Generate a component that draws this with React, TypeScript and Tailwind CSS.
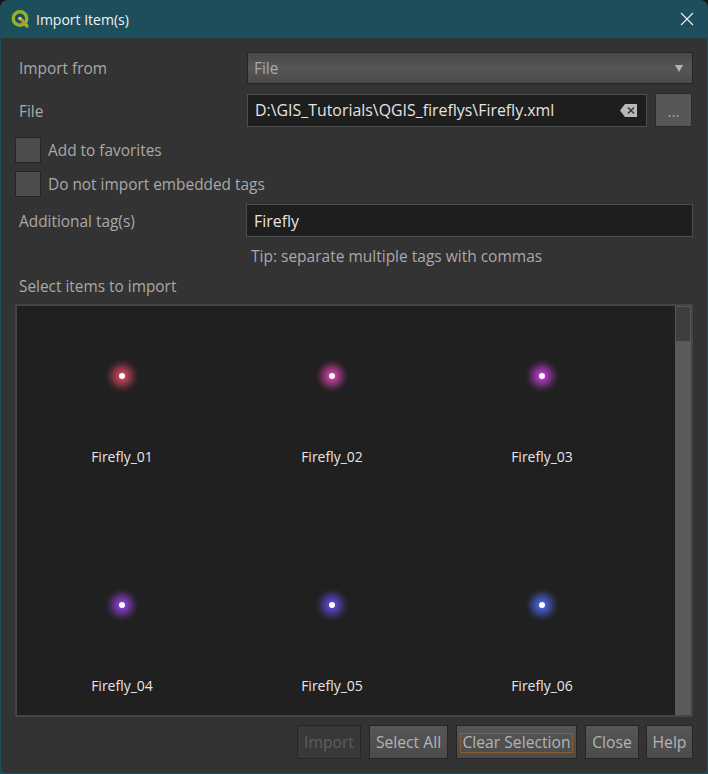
const items = [
  { n: "Firefly_01", c: "#c8455f" },
  { n: "Firefly_02", c: "#c540a0" },
  { n: "Firefly_03", c: "#b53ac8" },
  { n: "Firefly_04", c: "#8a3ed0" },
  { n: "Firefly_05", c: "#5a48d0" },
  { n: "Firefly_06", c: "#4a62d8" },
];

function Btn({ label, w, disabled, focus }: { label: string; w: string; disabled?: boolean; focus?: boolean }) {
  return (
    <div
      className={`${w} h-[34px] flex items-center justify-center pt-[1px] border border-[#262626] ${
        disabled ? "bg-[#383838] text-[#5e5e5e]" : "bg-gradient-to-b from-[#565656] to-[#4b4b4b] text-[#b4b4b4]"
      }`}
    >
      {focus ? (
        <span className="border border-[#8a5e30] h-[20px] px-[1px] flex items-center leading-none">{label}</span>
      ) : (
        label
      )}
    </div>
  );
}

function QgisLogo() {
  return (
    <svg width="20" height="20" viewBox="0 0 20 20" className="shrink-0">
      <circle cx="10" cy="9.5" r="6.8" fill="none" stroke="#8db32c" strokeWidth="3.4" />
      <path d="M12 11.5l5 5.5" stroke="#8db32c" strokeWidth="3.4" strokeLinecap="round" />
      <path d="M9.5 8.5l4 4.5" stroke="#e8a33a" strokeWidth="2.4" />
      <circle cx="10" cy="9.5" r="1.8" fill="#e2c85a" />
      <path d="M10.5 10.5l2.5 3" stroke="#d9592e" strokeWidth="1.6" />
    </svg>
  );
}

function Firefly({ n, c }: { n: string; c: string }) {
  return (
    <div className="h-[229px] flex flex-col items-center">
      <div
        className="mt-[46px] w-[48px] h-[48px] flex items-center justify-center"
        style={{ background: `radial-gradient(circle closest-side, ${c} 0%, ${c}d8 20%, ${c}80 38%, ${c}30 54%, ${c}10 64%, transparent 72%)` }}
      >
        <div className="w-[6px] h-[6px] rounded-full bg-white" />
      </div>
      <div className="mt-[47px] text-[14px] leading-[20px] text-[#e6e6e6]">{n}</div>
    </div>
  );
}

export default function App() {
  return (
    <div className="w-[708px] h-[774px] bg-[#161616] overflow-hidden font-['Open_Sans','Liberation_Sans',sans-serif] text-[15.4px]">
      <div className="w-full h-full flex flex-col rounded-t-[8px] overflow-hidden bg-[#1c4f5b]">
        <div className="h-[38px] shrink-0 flex items-center pl-[10px] pr-[14px] text-[#f2f2f2] text-[14px]">
          <QgisLogo />
          <span className="ml-[6px]">Import Item(s)</span>
          <svg width="14" height="14" viewBox="0 0 14 14" className="ml-auto">
            <path d="M1 1l12 12M13 1L1 13" stroke="#f0f0f0" strokeWidth="1.1" fill="none" />
          </svg>
        </div>
        <div className="flex-1 mx-[1px] mb-[1px] bg-[#333333] rounded-b-[4px] flex flex-col px-[14px] pt-[14px] text-[#a9a9a9]">
          <div className="flex items-center h-[32px]">
            <span className="w-[232px] pl-[4px] pt-[2px]">Import from</span>
            <div className="flex-1 h-[32px] flex items-center justify-between pl-[6px] pr-[9px] border border-[#262626] bg-gradient-to-b from-[#484848] via-[#565656] to-[#4a4a4a] text-[#a9a9a9]">
              <span className="pt-[2px]">File</span>
              <svg width="8" height="7" viewBox="0 0 8 7"><path d="M0 0h8L4 7z" fill="#b4b4b4" /></svg>
            </div>
          </div>
          <div className="flex items-center h-[34px] mt-[9px]">
            <span className="w-[232px] pl-[4px] pt-[4px]">File</span>
            <div className="w-[400px] h-[33px] flex items-center justify-between pl-[7px] pr-[9px] border border-[#4e4e4e] bg-[#1e1e1e] text-[#e4e4e4] text-[15.9px]">
              <span className="pt-[2px]">D:\GIS_Tutorials\QGIS_fireflys\Firefly.xml</span>
              <svg width="17" height="13" viewBox="0 0 17 13">
                <path d="M5 0h12v13H5L0 6.5z" fill="#b8b8b8" />
                <path d="M8 3.5l6 6M14 3.5l-6 6" stroke="#3a3a3a" strokeWidth="1.6" />
              </svg>
            </div>
            <div className="ml-[8px] w-[37px] h-[34px] flex items-center justify-center pt-[3px] border border-[#2a2a2a] bg-[#575757] text-[#a0a0a0]">...</div>
          </div>
          <div className="flex items-center h-[26px] mt-[10px]">
            <div className="w-[26px] h-[26px] border border-[#262626] bg-[#4c4c4c]" />
            <span className="ml-[7px] pt-[2px]">Add to favorites</span>
          </div>
          <div className="flex items-center h-[26px] mt-[8px]">
            <div className="w-[26px] h-[26px] border border-[#262626] bg-[#4c4c4c]" />
            <span className="ml-[7px] pt-[2px]">Do not import embedded tags</span>
          </div>
          <div className="flex items-center h-[33px] mt-[7px]">
            <span className="w-[231px] pl-[4px] pt-[2px]">Additional tag(s)</span>
            <div className="flex-1 h-[33px] flex items-center pl-[7px] pt-[2px] border border-[#4e4e4e] bg-[#1e1e1e] text-[#e4e4e4] text-[15.9px]">Firefly</div>
          </div>
          <div className="h-[20px] mt-[9px] pl-[236px] pt-[2px] flex items-center text-[15.5px]">Tip: separate multiple tags with commas</div>
          <div className="h-[20px] mt-[10px] pl-[4px] pt-[2px] flex items-center">Select items to import</div>
          <div className="mt-[8px] h-[413px] border-2 border-[#444444] bg-[#202020] flex">
            <div className="flex-1 grid grid-cols-[210px_210px_210px] grid-rows-[229px_181px] content-start overflow-hidden">
              {items.map((i) => (
                <Firefly key={i.n} n={i.n} c={i.c} />
              ))}
            </div>
            <div className="w-[16px] bg-[#5a5a5a]">
              <div className="h-[36px] bg-[#3e3e3e] border border-[#585858]" />
            </div>
          </div>
          <div className="flex justify-end gap-[8px] mt-[8px] text-[15.7px]">
            <Btn label="Import" w="w-[64px]" disabled />
            <Btn label="Select All" w="w-[79px]" />
            <Btn label="Clear Selection" w="w-[121px]" focus />
            <Btn label="Close" w="w-[54px]" />
            <Btn label="Help" w="w-[47px] -ml-[1px]" />
          </div>
        </div>
      </div>
    </div>
  );
}
